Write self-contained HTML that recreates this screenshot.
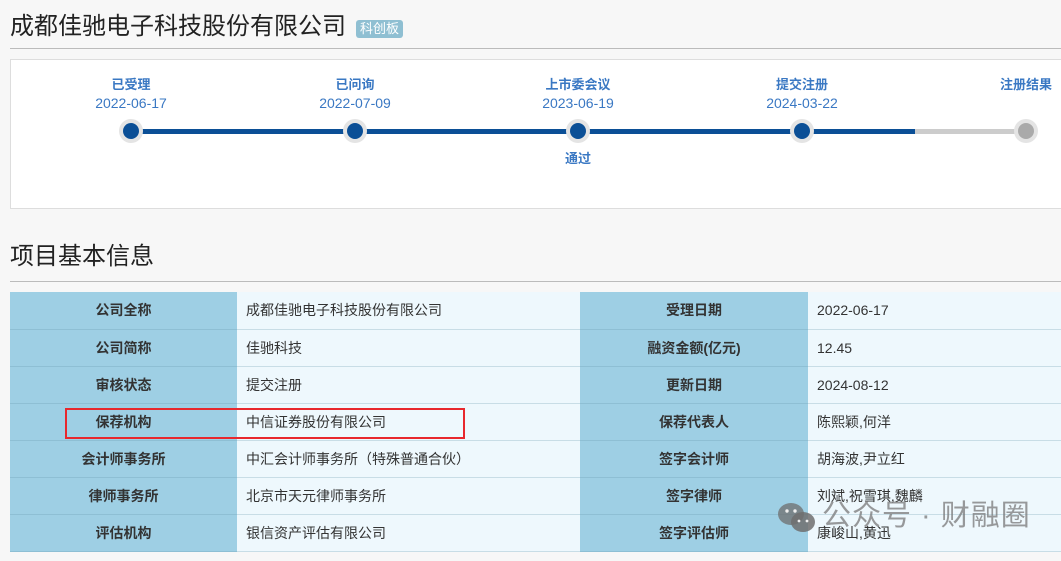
<!DOCTYPE html>
<html><head><meta charset="utf-8"><style>
*{margin:0;padding:0;box-sizing:border-box}
body{width:1061px;height:561px;background:#f7f7f7;font-family:"Liberation Sans","Noto Sans CJK SC",sans-serif;position:relative;overflow:hidden;color:#333}
.title{position:absolute;left:10px;top:11px;font-size:24px;color:#222;line-height:32px}
.tag{position:absolute;left:356px;top:20px;background:#8fbfd2;color:#fff;font-size:13px;line-height:18px;padding:0 4px;border-radius:3px}
.hl{position:absolute;left:10px;right:0;height:1px;background:#bbb}
.box{position:absolute;left:10px;top:59px;width:1060px;height:150px;background:#fff;border:1px solid #ddd}
.st{position:absolute;width:160px;margin-left:-80px;text-align:center;color:#3a78c3;font-size:14px}
.st b{display:block;font-weight:bold;line-height:18px;font-size:13px}
.st span{display:block;line-height:18px}
.dot{position:absolute;width:24px;height:24px;margin-left:-12px;border-radius:50%;background:#e4e4e4;top:119px}
.dot i{position:absolute;left:4px;top:4px;width:16px;height:16px;border-radius:50%;background:#0b4f96}
.sec{position:absolute;left:10px;top:241px;font-size:24px;color:#222;line-height:32px}
table{position:absolute;left:10px;top:292px;width:1051px;border-collapse:collapse;font-size:14px}
td{height:37px;border-bottom:1px solid #c8dde6}
td.l{background:#9ecfe4;text-align:center;font-weight:bold;color:#333;border-bottom-color:#8ebfd4}
td.v{background:#eef8fd;padding-left:9px;color:#333}
.red{position:absolute;left:65px;top:408px;width:400px;height:31px;border:2px solid #e8282d}
.wm{position:absolute;top:499px;font-size:29px;color:rgba(120,120,120,.75);line-height:34px;letter-spacing:1px}
</style></head><body>
<div class="title">成都佳驰电子科技股份有限公司</div>
<div class="tag">科创板</div>
<div class="hl" style="top:48px"></div>
<div class="box"></div>
<div style="position:absolute;left:131px;top:129px;width:784px;height:5px;background:#0b4f96"></div>
<div style="position:absolute;left:915px;top:129px;width:111px;height:5px;background:#ccc"></div>
<div class="st" style="left:131px;top:76px"><b>已受理</b><span>2022-06-17</span></div>
<div class="st" style="left:355px;top:76px"><b>已问询</b><span>2022-07-09</span></div>
<div class="st" style="left:578px;top:76px"><b>上市委会议</b><span>2023-06-19</span></div>
<div class="st" style="left:802px;top:76px"><b>提交注册</b><span>2024-03-22</span></div>
<div class="st" style="left:1026px;top:76px"><b>注册结果</b></div>
<div class="dot" style="left:131px"><i></i></div>
<div class="dot" style="left:355px"><i></i></div>
<div class="dot" style="left:578px"><i></i></div>
<div class="dot" style="left:802px"><i></i></div>
<div class="dot" style="left:1026px"><i style="background:#aaa"></i></div>
<div class="st" style="left:578px;top:150px"><b>通过</b></div>
<div class="sec">项目基本信息</div>
<div class="hl" style="top:281px"></div>
<table>
<colgroup><col style="width:227px"><col style="width:343px"><col style="width:228px"><col></colgroup>
<tr><td class="l">公司全称</td><td class="v">成都佳驰电子科技股份有限公司</td><td class="l">受理日期</td><td class="v">2022-06-17</td></tr>
<tr><td class="l">公司简称</td><td class="v">佳驰科技</td><td class="l">融资金额(亿元)</td><td class="v">12.45</td></tr>
<tr><td class="l">审核状态</td><td class="v">提交注册</td><td class="l">更新日期</td><td class="v">2024-08-12</td></tr>
<tr><td class="l">保荐机构</td><td class="v">中信证券股份有限公司</td><td class="l">保荐代表人</td><td class="v">陈熙颖,何洋</td></tr>
<tr><td class="l">会计师事务所</td><td class="v">中汇会计师事务所（特殊普通合伙）</td><td class="l">签字会计师</td><td class="v">胡海波,尹立红</td></tr>
<tr><td class="l">律师事务所</td><td class="v">北京市天元律师事务所</td><td class="l">签字律师</td><td class="v">刘斌,祝雪琪,魏麟</td></tr>
<tr><td class="l">评估机构</td><td class="v">银信资产评估有限公司</td><td class="l">签字评估师</td><td class="v">康峻山,黄迅</td></tr>
</table>
<div class="red"></div>
<svg style="position:absolute;left:777px;top:501px" width="40" height="34" viewBox="0 0 40 34"><ellipse cx="14" cy="13" rx="13" ry="11" fill="rgba(110,110,110,.75)"/><ellipse cx="26" cy="21" rx="12" ry="10" fill="rgba(110,110,110,.85)"/><circle cx="10" cy="10" r="1.7" fill="#eee"/><circle cx="18" cy="10" r="1.7" fill="#eee"/><circle cx="22" cy="20" r="1.4" fill="#eee"/><circle cx="30" cy="20" r="1.4" fill="#eee"/></svg>
<div class="wm" style="left:822px">公众号 · 财融圈</div>
</body></html>
